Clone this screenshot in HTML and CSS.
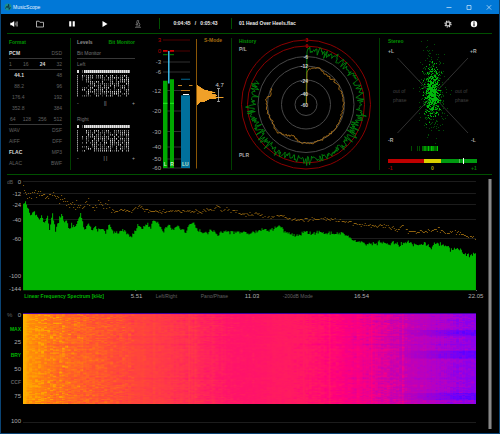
FILE: index.html
```html
<!DOCTYPE html>
<html lang="en">
<head>
<meta charset="utf-8">
<title>MusicScope</title>
<link rel="stylesheet" href="styles.css">
</head>
<body>
<div class="window">
  <header class="titlebar">
    <svg class="logo" viewBox="0 0 8 8"><circle cx="4" cy="4" r="3.4" fill="#1c8f8c"/><path d="M1.5 5.5L3 3.2 3.8 4.6 4.6 1.4 5.2 6.4 6.4 4.4" fill="none" stroke="#0a2f45" stroke-width=".9"/></svg>
    <span class="app-name">MusicScope</span>
    <button class="win-btn" aria-label="Minimize"><svg viewBox="0 0 6 6"><path d="M.5 3.5h5" /></svg></button>
    <button class="win-btn" aria-label="Maximize"><svg viewBox="0 0 6 6"><path d="M1 1.5h4v4h-4z"/></svg></button>
    <button class="win-btn" aria-label="Close"><svg viewBox="0 0 6 6"><path d="M.8 1.2l4.4 4.4M5.2 1.2L.8 5.6"/></svg></button>
  </header>

  <nav class="toolbar">
    <button aria-label="Volume"><svg viewBox="0 0 8 8"><path d="M.3 2.8h1.6L4.2.9v6.2L1.9 5.2H.3z" fill="#fff"/><path d="M5 2.6q1 1.4 0 2.8M6 1.8q1.6 2.2 0 4.4M7 1.2q1.8 2.8 0 5.6" fill="none" stroke="#ccc" stroke-width=".6"/></svg></button>
    <button aria-label="Open"><svg viewBox="0 0 8 8"><path d="M.5 7V1.2h2.6l.8 1.1h3.6V7z" fill="none" stroke="#bbb" stroke-width=".9"/></svg></button>
    <button aria-label="Pause"><svg viewBox="0 0 8 8"><path d="M1.2 1.2h2.1v5.2H1.2zM4.7 1.2h2.1v5.2H4.7z" fill="#fff"/></svg></button>
    <button aria-label="Play"><svg viewBox="0 0 8 8"><path d="M1.5 1l5 3-5 3z" fill="#fff"/></svg></button>
    <button aria-label="Analyze"><svg viewBox="0 0 8 8"><path d="M3.3.3l1.5.4-.8 3-1.5-.4zM4.8 2.5q2 1.6.5 3.4M1.6 4.5h2.6M1 7.3h6M2 6h4" fill="none" stroke="#888" stroke-width=".7"/></svg></button>
    <span class="time">0:04:45 &nbsp; / &nbsp; 0:05:43</span>
    <span class="track">01 Head Over Heels.flac</span>
    <button aria-label="Settings"><svg viewBox="0 0 8 8"><circle cx="4" cy="4" r="3" fill="none" stroke="#ddd" stroke-width="1.2" stroke-dasharray="1.3 1.05"/><circle cx="4" cy="4" r="2" fill="none" stroke="#ddd" stroke-width="1.2"/></svg></button>
    <button aria-label="Info"><svg viewBox="0 0 8 8"><circle cx="4" cy="4" r="3.2" fill="#fff"/><path d="M4 1.6v1.1M4 3.3v2.9" stroke="#000" stroke-width="1.1"/></svg></button>
  </nav>

  <section class="panels">
    <div class="panel format">
      <h2>Format</h2>
      <div class="row rule pcm"><b>PCM</b><span>DSD</span></div>
      <div class="row rule bits"><span>1</span><span>16</span><b>24</b><span>32</span></div>
      <div class="row rate"><b>44.1</b><span>48</span></div>
      <div class="row rate"><span>88.2</span><span>96</span></div>
      <div class="row rate"><span>176.4</span><span>192</span></div>
      <div class="row rate"><span>352.8</span><span>384</span></div>
      <div class="row rule dsd"><span>64</span><span>128</span><span>256</span><span>512</span></div>
      <div class="row"><span>WAV</span><span>DSF</span></div>
      <div class="row"><span>AIFF</span><span>DFF</span></div>
      <div class="row"><b>FLAC</b><span>MP3</span></div>
      <div class="row"><span>ALAC</span><span>BWF</span></div>
    </div>

    <div class="panel levels">
      <div class="tabs"><button>Levels</button><button class="on">Bit Monitor</button></div>
      <div class="row rule"><span>Bit Monitor</span></div>
      <div class="row"><span>Left</span></div>
      <svg class="bitmap" viewBox="0 0 58 28" id="bits-left"></svg>
      <div class="scale"><span>-</span><span>||</span><span>+</span></div>
      <div class="row second"><span>Right</span></div>
      <svg class="bitmap" viewBox="0 0 58 28" id="bits-right"></svg>
      <div class="scale"><span>-</span><span>| |</span><span>+</span></div>
    </div>

    <div class="panel chart meters">
      <svg viewBox="150 38 81 132">
        <g id="meter-grid"></g>
        <path d="M163 80.7h4.5V168H163zM170 79.3h4V168h-4z" fill="#00a800"/>
        <path d="M163 103.3h4.5M170 103.3h4" stroke="#20f020"/>
        <path d="M163 50.9h4.5M170 50.9h4" stroke="#d00000" stroke-width="1.6"/>
        <path d="M163 54.7h4.5M170 54.7h4" stroke="#008a00"/>
        <path d="M168.8 51v32.5" stroke="#40c8f8" stroke-width="1.4"/>
        <path d="M181 95.3h9V168h-9z" fill="#00709c"/>
        <path d="M181 79.3h9" stroke="#00587c" stroke-width="1.2"/>
        <path d="M178 85.5h4M189 85.5h3.5" stroke="#c88420"/>
        <path d="M181 90.5h9" stroke="#b87818"/>
        <path d="M183 94.5h6" stroke="#fff"/>
        <path d="M196.5 39v129.500" stroke="#8a5606"/>
        <path id="loudness" fill="#f0a028"/>
        <path d="M217 88.500h3M217 101.500h3M218.500 88.500v13" stroke="#ccc" stroke-width=".7"/>
        <text class="t6 lite" x="215.500" y="87">4.7</text>
        <text class="t5 bold amber" x="204" y="42">S-Mode</text>
        <text class="t5 bold tint" x="163.800" y="165.500">L</text><text class="t5 bold tint" x="170.300" y="165.500">R</text><text class="t5 bold tint" x="182" y="165.500">LU</text>
      </svg>
    </div>

    <div class="panel chart history">
      <svg viewBox="232 38 147 132">
        <g fill="none" stroke="#484848"><circle cx="306" cy="104.500" r="48"/><circle cx="306" cy="104.500" r="38.500"/><circle cx="306" cy="104.500" r="24.500"/><circle cx="306" cy="104.500" r="11"/></g>
        <g fill="none" stroke="#8c0000"><circle cx="306" cy="104.500" r="64.500"/><circle cx="306" cy="104.500" r="58.500"/></g>
        <path id="trace-peak" fill="none" stroke="#00840c" stroke-width=".9"/>
        <path id="trace-loud" fill="none" stroke="#b07418" stroke-width=".9"/>
        <text class="t5 bold green" x="239" y="43">History</text>
        <text class="t5 bold grey" x="239" y="51">P/L</text>
        <text class="t5 bold grey" x="239" y="157">PLR</text>
        <g class="t5 bold lite end"><text class="red" x="308" y="42">3</text><text class="red" x="308" y="48">0</text><text x="308" y="58.500">-6</text><text x="308" y="68">-12</text><text x="308" y="82.500">-24</text><text x="308" y="96">-40</text><text x="308" y="106.500">-60</text></g>
      </svg>
    </div>

    <div class="panel chart stereo">
      <svg viewBox="380 38 112 132">
        <path d="M397.500 58L468 133M468 58L397.500 133" stroke="#383838" stroke-width=".9"/>
        <g class="t5 dark"><text x="393" y="93">out of</text><text x="393" y="102">phase</text><text x="455" y="93">out of</text><text x="455" y="102">phase</text></g>
        <path id="cloud-dim" stroke="#004c06"/><path id="cloud" stroke="#00b80c"/>
        <g class="t5 bold"><text class="green" x="388" y="43">Stereo</text><g class="grey"><text x="388" y="53">+L</text><text x="470" y="53">+R</text><text x="388" y="142">-R</text><text x="471" y="142">-L</text></g></g>
        <path d="M411.500 146v5M417.500 146v5M419.500 146v5" stroke="#004c00"/>
        <path d="M422 146h16v5h-16z" fill="#006400"/><path d="M425 146v5M428.500 146v5M431.500 146v5M433 146v5M437.500 146v5" stroke="#00c800"/>
        <path d="M388 159h36v4h-36z" fill="#c00000"/><path d="M424 159h17v4h-17z" fill="#dcd000"/><path d="M441 159h36v4h-36z" fill="#009a10"/>
        <path d="M459.500 159v4" stroke="#58b858"/><path d="M463.500 158v6" stroke="#fff"/>
        <g class="t5 bold"><text x="388" y="170" fill="#a00000">-1</text><text x="431" y="170" fill="#b0a400">0</text><text x="471" y="170" fill="#008000">+1</text></g>
      </svg>
    </div>
  </section>

  <main class="analysis">
    <div class="plots">
      <svg class="spectrum" viewBox="7 180 480 112">
        <path d="M23 182.500h452M23 194.500h452M23 205.500h452M23 220.500h452M23 239.500h452" stroke="#1c1c1c"/>
        <path id="spectrum-area" fill="#00b400"/>
        <path id="spectrum-peak" stroke="#8c600e"/>
        <path d="M135.500 291v1.500M249.500 291v1.500M362.500 291v1.500M475.500 291v1.500" stroke="#999"/>
        <text class="t5 mid" x="7" y="184.500">dB</text>
        <g class="t6 grey end"><text x="21" y="184.500">0</text><text x="21" y="196.500">-12</text><text x="21" y="207.500">-24</text><text x="21" y="222.500">-40</text><text x="21" y="242">-60</text><text x="21" y="278.500">-100</text><text x="21" y="292">-144</text></g>
      </svg>
      <div class="freq-axis">
        <button class="on">Linear Frequency Spectrum [kHz]</button><span>5.51</span>
        <button>Left/Right</button><button>Pano/Phase</button><span>11.03</span>
        <button>-200dB Mode</button><span>16.54</span><i></i><span>22.05</span>
      </div>
      <div class="spectrogram">
        <div class="time-axis">
          <span class="zero"><i>%</i>0</span><button class="on">MAX</button><span>25</span><button class="on">BRY</button><span>50</span><button>CCF</button><span>75</span><span class="last">100</span>
        </div>
        <div class="heat"><canvas id="heat" width="452" height="91"></canvas></div>
      </div>
    </div>
    <div class="scrollbar"></div>
  </main>
</div>
<script src="app.js"></script>
</body>
</html>
```
FILE: styles.css
```css
* { box-sizing: border-box; }
body { margin: 0; background: #000; color: #606060; font: 5px/11px "Liberation Sans", Arial, sans-serif; }
button { margin: 0; padding: 0; border: 0; background: none; color: inherit; font: inherit; cursor: pointer; }
svg { display: block; }
.window { display: flex; flex-direction: column; min-height: 100vh; border: solid #0b4474; border-width: 0 1px 1px; }

.titlebar { display: flex; align-items: center; height: 14px; padding-left: 3px; background: #0178d7; color: #e4f2ff; }
.logo { width: 8px; height: 8px; margin-right: 1px; }
.app-name { flex: 1; }
.win-btn { display: flex; justify-content: center; width: 20px; }
.win-btn svg { width: 6px; height: 6px; fill: none; stroke: #d4e9fa; stroke-width: .7; }

.toolbar { display: grid; grid-template-columns: 13px 40px 24px 42px 24px 9px 73px 1fr 26px 26px 5px; align-items: center; height: 20px; margin: 0 7px 0 6px; border-bottom: 1px solid #005000; color: #e8e8e8; font-weight: bold; }
.toolbar button { display: flex; justify-content: center; }
.toolbar svg { width: 8px; height: 8px; }
.time { grid-column: 7; text-align: center; border: solid #005000; border-width: 0 1px; }
.track { padding-left: 7px; }

.panels { display: grid; grid-template-columns: 64fr 79fr 82fr 148fr 112fr; margin: 0 7px 0 6px; padding: 4px 0; border-bottom: 1px solid #005000; }
.format, .meters, .history { border-right: 1px solid #004000; }
.chart svg { width: 100%; }
.format { padding: 0 8px 0 2px; }
.format h2 { margin: 0; padding-bottom: 2px; font: bold 5px/8px "Liberation Sans", Arial, sans-serif; color: #009400; }
.row { display: flex; justify-content: space-between; }
.row b { color: #d8d8d8; }
.rule { border-bottom: 1px solid #383838; }
.pcm { line-height: 10px; }
.bits, .dsd { line-height: 10px; }
.rate { padding-left: 3px; }
.rate > :first-child { width: 12px; text-align: right; }
.dsd { padding-left: 1px; }
.levels { padding: 0 15px 0 6px; }
.tabs { display: flex; justify-content: space-between; line-height: 8px; font-weight: bold; color: #8c8c8c; }
.levels .rule { padding-top: 2px; line-height: 10px; }
.levels .row { color: #747474; }
.on { color: #00b400; }
.tabs .on { color: #009400; }
.bitmap { width: 100%; height: 28px; }
.scale { display: flex; justify-content: space-between; line-height: 11px; color: #a0a0a0; }
.second { padding-top: 5px; }

.t5 { font-size: 5px; }
.t6 { font-size: 6px; }
.bold { font-weight: bold; }
.end { text-anchor: end; }
.lite { fill: #d0d0d0; }
.grey { fill: #acacac; }
.mid { fill: #606060; }
.dark { fill: #404040; }
.tint { fill: #c8e8c8; }
.amber { fill: #a86c10; }
.green { fill: #009400; }
.red { fill: #b80000; }

.analysis { display: flex; flex: 1; margin: 4px 7px 0 6px; }
.plots { display: flex; flex: 1; flex-direction: column; }
.scrollbar { width: 4px; margin-bottom: 4px; border: solid #484848; border-width: 0 1px; background: #888; }
.spectrum { width: 100%; }
.freq-axis { display: grid; grid-template-columns: 16fr 100fr 24fr 35fr 60fr 14fr 76fr 50fr 76fr 24fr; line-height: 10px; white-space: nowrap; text-align: center; }
.freq-axis > :first-child { grid-column: 2; padding-left: 1px; text-align: left; font-weight: bold; }
.freq-axis span { color: #b0b0b0; font-size: 6px; }
.spectrogram { display: grid; grid-template-columns: 16fr 452fr 12fr; padding-top: 8px; }
.time-axis { display: flex; flex-direction: column; justify-content: space-between; height: 119px; padding-right: 2px; line-height: 13px; text-align: right; }
.time-axis button { text-align: right; font-weight: bold; line-height: 13px; }
.time-axis span { color: #acacac; font-size: 6px; }
.time-axis .zero { display: flex; justify-content: space-between; line-height: 13px; }
.time-axis i { color: #606060; font-style: normal; }
.time-axis .last { padding-top: 12px; }
.heat { margin-top: 4px; border-bottom: 1px solid #1c1c1c; height: 110px; }
.heat canvas { display: block; width: 100%; height: 91px; border-top: 1px solid #4000a0; }
```
FILE: app.js
```js
let seed = 7;
const rnd = () => (seed = (seed * 16807) % 2147483647) / 2147483647;
const gauss = () => rnd() + rnd() + rnd() + rnd() - 2;
const byId = id => document.getElementById(id);
const lerp = (pts, x) => {
  for (let i = 1; i < pts.length; i++) {
    if (x <= pts[i][0]) {
      const [x0, y0] = pts[i - 1], [x1, y1] = pts[i];
      return y0 + (y1 - y0) * (x - x0) / (x1 - x0);
    }
  }
  return pts[pts.length - 1][1];
};

// Bit monitor: solid header row, then the random bit history
for (const id of ['bits-left', 'bits-right']) {
  let s = '<rect width="2" height="3" fill="#ddd"/><rect x="5" width="1" height="3" fill="#555"/>';
  for (let x = 7; x < 53; x += 2) {
    s += `<rect x="${x}" width="1.700" height="3" fill="#e4e4e4"/>`;
  }
  for (let y = 5; y < 27; y += 2) {
    s += `<rect y="${y}" width="1" height="1.500" fill="#999"/>`;
    for (let x = 5; x < 53; x += 2) {
      if (rnd() < (x < 8 ? 0.4 : 0.8)) {
        const g = Math.round(60 + rnd() * 160);
        s += `<rect x="${x}" y="${y}" width="1" height="1.600" fill="rgb(${g},${g},${g})"/>`;
      }
    }
  }
  byId(id).innerHTML = s;
}

// Level meter scale
byId('meter-grid').innerHTML = [[3, 40], [0, 51], [-3, 62], [-6, 72], [-12, 90.5], [-20, 111], [-30, 131.5], [-40, 147], [-50, 159], [-60, 168]]
  .map(([v, y]) => {
    const hot = v >= 0;
    return `<path d="M163 ${y}h27" stroke="${hot ? '#500000' : '#303030'}"/><text class="t6 end ${hot ? 'red' : 'grey'}" x="161" y="${y + 2}">${v}</text>`;
  }).join('');

// Loudness distribution
const dist = [[85, 1], [87, 4], [89, 7], [91, 14], [92, 18], [93, 14], [95, 20], [96, 17], [97, 26], [98, 18], [99, 12], [100, 10], [101, 8], [102, 3], [105, 0]];
let d = 'M197 85';
for (let y = 85; y <= 105; y++) d += `H${197 + lerp(dist, y) + (y > 88 && y < 100 ? rnd() * 2 : 0)}v1`;
byId('loudness').setAttribute('d', d + 'H197z');

// History traces, clockwise from the top
const polar = (deg, r) => {
  const a = deg * Math.PI / 180;
  return `${(306 + r * Math.sin(a)).toFixed(1)} ${(104.5 - r * Math.cos(a)).toFixed(1)}`;
};
let peak = 'M306 104L307 52', loud = 'M306.500 104L307 72';
for (let a = 2; a < 296; a += 0.9) {
  peak += 'L' + polar(a, 54.5 + gauss() * 4.4);
}
const loudness = [[3, 35], [18, 39], [35, 35], [58, 37], [90, 37], [130, 38], [172, 39], [190, 38], [203, 33], [224, 40], [240, 38], [268, 39.5], [280, 40], [286, 36], [296, 39]];
for (let a = 3; a < 296; a += 2) loud += 'L' + polar(a, lerp(loudness, a) + gauss() * 1.2);
byId('trace-peak').setAttribute('d', peak);
byId('trace-loud').setAttribute('d', loud);

// Stereo field
const cloud = (n, sx, sy) => {
  let s = '';
  for (let i = 0; i < n; i++) s += `M${Math.round(432 + gauss() * sx)} ${Math.round(92 + gauss() * sy)}.500h1`;
  return s;
};
byId('cloud-dim').setAttribute('d', cloud(480, 11, 34));
byId('cloud').setAttribute('d', cloud(560, 6, 19));

// Spectrum, in thirds of a pixel
const env = [[68, 95], [75, 95], [82, 112], [92, 135], [103, 122], [106, 138], [110, 124], [116, 150], [123, 133], [130, 158], [136, 154], [140, 128], [147, 180], [155, 127], [165, 172], [175, 150], [183, 128], [190, 155], [197, 145], [206, 178], [213, 155], [222, 168], [232, 145], [241, 128], [252, 180], [263, 155], [275, 180], [285, 165], [290, 178], [305, 170], [316, 190], [325, 158], [340, 188], [355, 185], [367, 172], [380, 190], [393, 198], [410, 162], [425, 172], [440, 155], [445, 175], [460, 148], [478, 162], [487, 185], [505, 155], [515, 180], [530, 168], [555, 182], [565, 160], [578, 150], [590, 178], [605, 185], [640, 180], [650, 195], [662, 180], [715, 182], [750, 188], [785, 172], [805, 180], [830, 165], [838, 165], [850, 180], [885, 195], [905, 182], [930, 188], [955, 182], [975, 190], [1025, 185], [1050, 205], [1100, 218], [1140, 212], [1160, 218], [1190, 215], [1205, 222], [1220, 210], [1245, 222], [1270, 220], [1290, 228], [1303, 213], [1325, 225], [1340, 222], [1350, 240], [1360, 230], [1395, 250], [1425, 250]];
const tops = [[75, 65], [85, 80], [105, 68], [120, 75], [140, 85], [155, 72], [175, 85], [195, 88], [215, 100], [245, 112], [265, 92], [280, 108], [295, 98], [310, 108], [325, 98], [335, 118], [390, 122], [415, 110], [430, 118], [460, 125], [550, 122], [600, 124], [620, 115], [635, 120], [650, 108], [665, 122], [680, 118], [730, 132], [765, 130], [800, 142], [838, 136], [860, 144], [900, 148], [980, 147], [1025, 152], [1060, 160], [1120, 168], [1160, 165], [1190, 182], [1205, 162], [1220, 183], [1250, 184], [1310, 176], [1335, 188], [1370, 187], [1395, 198], [1425, 200]];
let area = 'M23 291', dots = '';
for (let x = 23; x < 475; x++) {
  area += `V${(172 + (lerp(env, x * 3) + gauss() * 6) / 3).toFixed(1)}h1`;
  if (rnd() < 0.9) {
    const spread = x < 112 ? 11 : 5;
    dots += `M${x} ${Math.round(171 + (lerp(tops, x * 3) + gauss() * spread) / 3)}.500h1`;
  }
}
byId('spectrum-area').setAttribute('d', area + 'V291z');
byId('spectrum-peak').setAttribute('d', dots);

// Spectrogram heat map
const stops = [[0, 255, 170, 0], [10, 255, 138, 10], [40, 255, 110, 30], [90, 255, 78, 52], [150, 255, 55, 75], [215, 255, 18, 108], [270, 255, 30, 95], [320, 255, 0, 125], [345, 240, 0, 140], [380, 195, 0, 180], [420, 175, 0, 205], [452, 135, 0, 240]];
const channel = [1, 2, 3].map(c => stops.map(s => [s[0], s[c]]));
const cv = byId('heat'), ctx = cv.getContext('2d');
const cols = Array.from({ length: 452 }, () => gauss() * 7);
for (const x of [130, 165, 168, 171, 229, 268, 279, 305, 333, 347, 378]) { cols[x] -= 18; cols[x + 1] -= 14; }
for (let y = 0; y < 91; y++) {
  const line = gauss() * 9 + ([30, 31, 64, 65].includes(y) ? 16 : 0);
  const cool = (y > 15 && y < 22) || (y > 36 && y < 45) || (y > 79 && y < 87);
  let run = 0;
  for (let x = 0; x < 452; x++) {
    if (x % 3 === 0) run = gauss() * (x < 110 ? 34 : 16);
    const edge = Math.min(1, x / 30);
    const p = Math.max(0, Math.min(451, x + (line + run + cols[x]) * edge));
    let [r, g, b] = channel.map(c => lerp(c, p));
    if (cool && x > 370) {
      const k = Math.min(1, (x - 370) / 60);
      r -= 45 * k;
      b += 30 * k;
    }
    if (x < 4) g += 10;
    ctx.fillStyle = `rgb(${r | 0},${g | 0},${b | 0})`;
    ctx.fillRect(x, y, 1, 1);
  }
}
```
